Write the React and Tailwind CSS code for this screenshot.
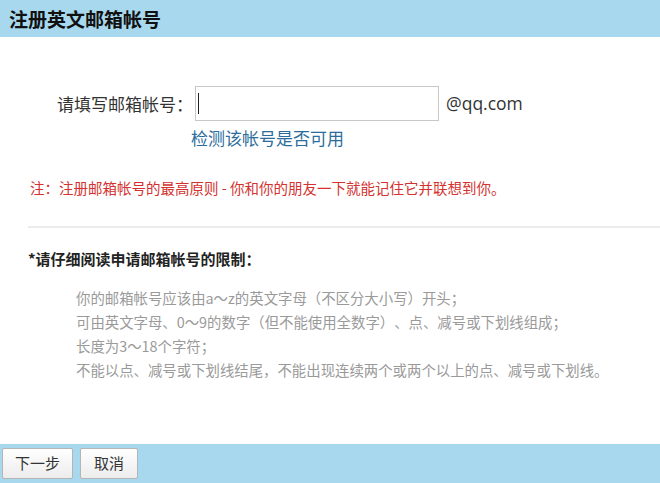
export default function App() {
  const rules = [
    '你的邮箱帐号应该由a～z的英文字母（不区分大小写）开头；',
    '可由英文字母、0～9的数字（但不能使用全数字）、点、减号或下划线组成；',
    '长度为3～18个字符；',
    '不能以点、减号或下划线结尾，不能出现连续两个或两个以上的点、减号或下划线。',
  ];
  const font = { fontFamily: '"Microsoft YaHei", "Noto Sans CJK SC", "Liberation Sans", sans-serif' };

  return (
    <div className="w-[660px] h-[483px] bg-white flex flex-col overflow-hidden [text-spacing-trim:space-all]" style={font}>
      {/* header */}
      <div className="h-[37px] bg-[#a7d8ee] flex items-center pl-[9px]">
        <span className="text-[19px] font-bold text-[#111] leading-none">注册英文邮箱帐号</span>
      </div>

      <div className="flex-1 flex flex-col">
        {/* input row */}
        <div className="flex items-center mt-[49px] pl-[57px]">
          <span className="w-[138px] text-[17px] text-[#333] whitespace-nowrap">请填写邮箱帐号：</span>
          <div className="w-[244px] h-[35px] border border-[#c8c8c8] bg-white flex items-center pl-[2px]">
            <div className="w-[1px] h-[21px] bg-[#222]" />
          </div>
          <span className="ml-[7px] text-[17.5px] text-[#333]" style={{ fontFamily: '"Open Sans", "Noto Sans", sans-serif' }}>@qq.com</span>
        </div>
        <div className="pl-[191px] mt-[4px] text-[17px] text-[#2b6d9c] leading-[26px]">检测该帐号是否可用</div>

        {/* note */}
        <div className="pl-[30px] mt-[27px] text-[14.5px] text-[#d3322f] leading-[20px] whitespace-nowrap">
          注：注册邮箱帐号的最高原则 - 你和你的朋友一下就能记住它并联想到你。
        </div>

        <div className="ml-[28px] mt-[28px] h-[2px] bg-[#ececec]" />

        <div className="pl-[28px] mt-[21px] text-[15px] font-bold text-[#222] leading-[20px]">*请仔细阅读申请邮箱帐号的限制：</div>

        <div className="pl-[76px] mt-[17px] flex flex-col text-[14.4px] text-[#9a9a9a] leading-[24px] whitespace-nowrap">
          {rules.map((r) => (
            <div key={r}>{r}</div>
          ))}
        </div>
      </div>

      {/* footer */}
      <div className="h-[39px] bg-[#a7d8ee] flex items-center gap-[7px] pl-[2px]">
        <button className="w-[71px] h-[31px] border border-[#b5b5b5] rounded-[2px] bg-gradient-to-b from-white to-[#ececec] text-[15px] text-[#333]">下一步</button>
        <button className="w-[58px] h-[31px] border border-[#b5b5b5] rounded-[2px] bg-gradient-to-b from-white to-[#ececec] text-[15px] text-[#333]">取消</button>
      </div>
    </div>
  );
}
